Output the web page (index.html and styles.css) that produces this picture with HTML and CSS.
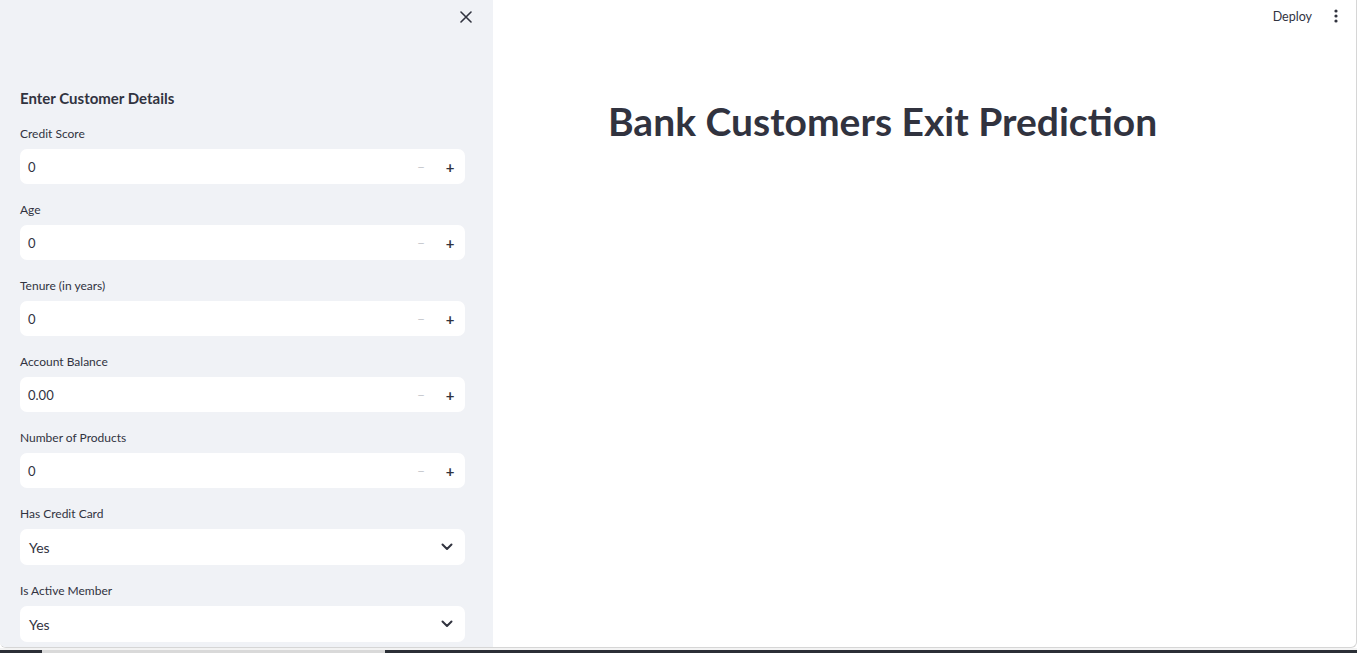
FILE: index.html
```html
<!DOCTYPE html>
<html>
<head>
<meta charset="utf-8">
<link rel="stylesheet" href="styles.css">
</head>
<body>
<div class="window">
  <div class="frame">
    <aside class="sidebar">
      <div class="side-top">
        <svg class="close" width="12" height="12" viewBox="0 0 12 12"><path d="M1 1L11 11M11 1L1 11" stroke="#31333f" stroke-width="1.6" stroke-linecap="round"/></svg>
      </div>
      <div class="side-content">
        <h3 class="side-head">Enter Customer Details</h3>
        <div class="field">
          <label class="lbl">Credit Score</label>
          <div class="num"><span class="val">0</span><span class="minus">−</span><span class="plus">+</span></div>
        </div>
        <div class="field">
          <label class="lbl">Age</label>
          <div class="num"><span class="val">0</span><span class="minus">−</span><span class="plus">+</span></div>
        </div>
        <div class="field">
          <label class="lbl">Tenure (in years)</label>
          <div class="num"><span class="val">0</span><span class="minus">−</span><span class="plus">+</span></div>
        </div>
        <div class="field">
          <label class="lbl">Account Balance</label>
          <div class="num"><span class="val">0.00</span><span class="minus">−</span><span class="plus">+</span></div>
        </div>
        <div class="field">
          <label class="lbl">Number of Products</label>
          <div class="num"><span class="val">0</span><span class="minus">−</span><span class="plus">+</span></div>
        </div>
        <div class="field">
          <label class="lbl">Has Credit Card</label>
          <div class="sel"><span class="sval">Yes</span><svg class="chev" width="12" height="8" viewBox="0 0 12 8"><path d="M1.5 1.5L6 6L10.5 1.5" fill="none" stroke="#31333f" stroke-width="2" stroke-linecap="round" stroke-linejoin="round"/></svg></div>
        </div>
        <div class="field">
          <label class="lbl">Is Active Member</label>
          <div class="sel"><span class="sval">Yes</span><svg class="chev" width="12" height="8" viewBox="0 0 12 8"><path d="M1.5 1.5L6 6L10.5 1.5" fill="none" stroke="#31333f" stroke-width="2" stroke-linecap="round" stroke-linejoin="round"/></svg></div>
        </div>
      </div>
    </aside>
    <main class="main">
      <header class="topbar">
        <span class="deploy">Deploy</span>
        <svg class="kebab" width="4" height="14" viewBox="0 0 4 14"><circle cx="2" cy="2" r="1.6" fill="#31333f"/><circle cx="2" cy="7" r="1.6" fill="#31333f"/><circle cx="2" cy="12" r="1.6" fill="#31333f"/></svg>
      </header>
      <div class="block">
        <h1 class="title">Bank Customers Exit Prediction</h1>
      </div>
    </main>
  </div>
  <div class="under"></div>
  <div class="taskbar">
    <div class="tb-dark a"></div>
    <div class="tb-light"></div>
    <div class="tb-dark b"></div>
  </div>
</div>
</body>
</html>
```
FILE: styles.css
```css
html, body {
  margin: 0;
  padding: 0;
  background: #ffffff;
  font-family: "Lato", "Noto Sans", sans-serif;
  color: #31333f;
}
.window {
  width: 1357px;
  height: 653px;
  display: flex;
  flex-direction: column;
  overflow: hidden;
}
.frame {
  display: flex;
  border-right: 1px solid #d6d6d6;
  border-bottom: 1px solid #d6d6d6;
  border-bottom-right-radius: 6px;
  border-bottom-left-radius: 6px;
  overflow: hidden;
  box-sizing: border-box;
  height: 648px;
  flex: none;
}
.under {
  height: 2px;
  background: #f3f3f3;
  flex: none;
}
.taskbar {
  height: 3px;
  display: flex;
  flex: none;
}
.tb-dark { background: #2b2f36; }
.tb-dark.a { width: 42px; }
.tb-light { width: 343px; background: #d9d9d9; }
.tb-dark.b { flex: 1; }

.sidebar {
  width: 493px;
  flex: none;
  background: #f0f2f6;
  display: flex;
  flex-direction: column;
  overflow: hidden;
}
.side-top {
  height: 34px;
  flex: none;
  display: flex;
  align-items: center;
  justify-content: flex-end;
  padding-right: 21px;
}
.close { display: block; }
.side-content {
  flex: none;
  padding: 54px 28px 0 20px;
}
.side-head {
  margin: 0 0 18px 0;
  font-size: 15px;
  font-weight: 700;
  line-height: 20px;
}
.field {
  margin-bottom: 18px;
}
.lbl {
  display: block;
  font-size: 12px;
  line-height: 16px;
  margin-bottom: 7px;
}
.num, .sel {
  height: 35px;
  background: #ffffff;
  border-radius: 7px;
  display: flex;
  align-items: center;
  padding-left: 8px;
  box-sizing: border-box;
}
.sel { height: 36px; padding-left: 9px; }
.val {
  flex: 1;
  font-size: 13px;
}
.minus {
  width: 28px;
  text-align: center;
  color: #c9cbd0;
  font-size: 13px;
}
.plus {
  width: 30px;
  text-align: center;
  font-size: 15px;
  font-weight: 700;
  color: #31333f;
}
.sval {
  flex: 1;
  font-size: 14px;
}
.chev { margin-right: 12px; }

.main {
  flex: 1;
  display: flex;
  flex-direction: column;
}
.topbar {
  height: 32px;
  display: flex;
  align-items: center;
  justify-content: flex-end;
  padding-right: 18px;
  gap: 22px;
  flex: none;
}
.deploy {
  font-size: 12.5px;
}
.kebab { display: block; }
.block {
  padding: 63px 0 0 115px;
}
.title {
  margin: 0;
  font-size: 39px;
  font-weight: 700;
  line-height: 52px;
}
```
